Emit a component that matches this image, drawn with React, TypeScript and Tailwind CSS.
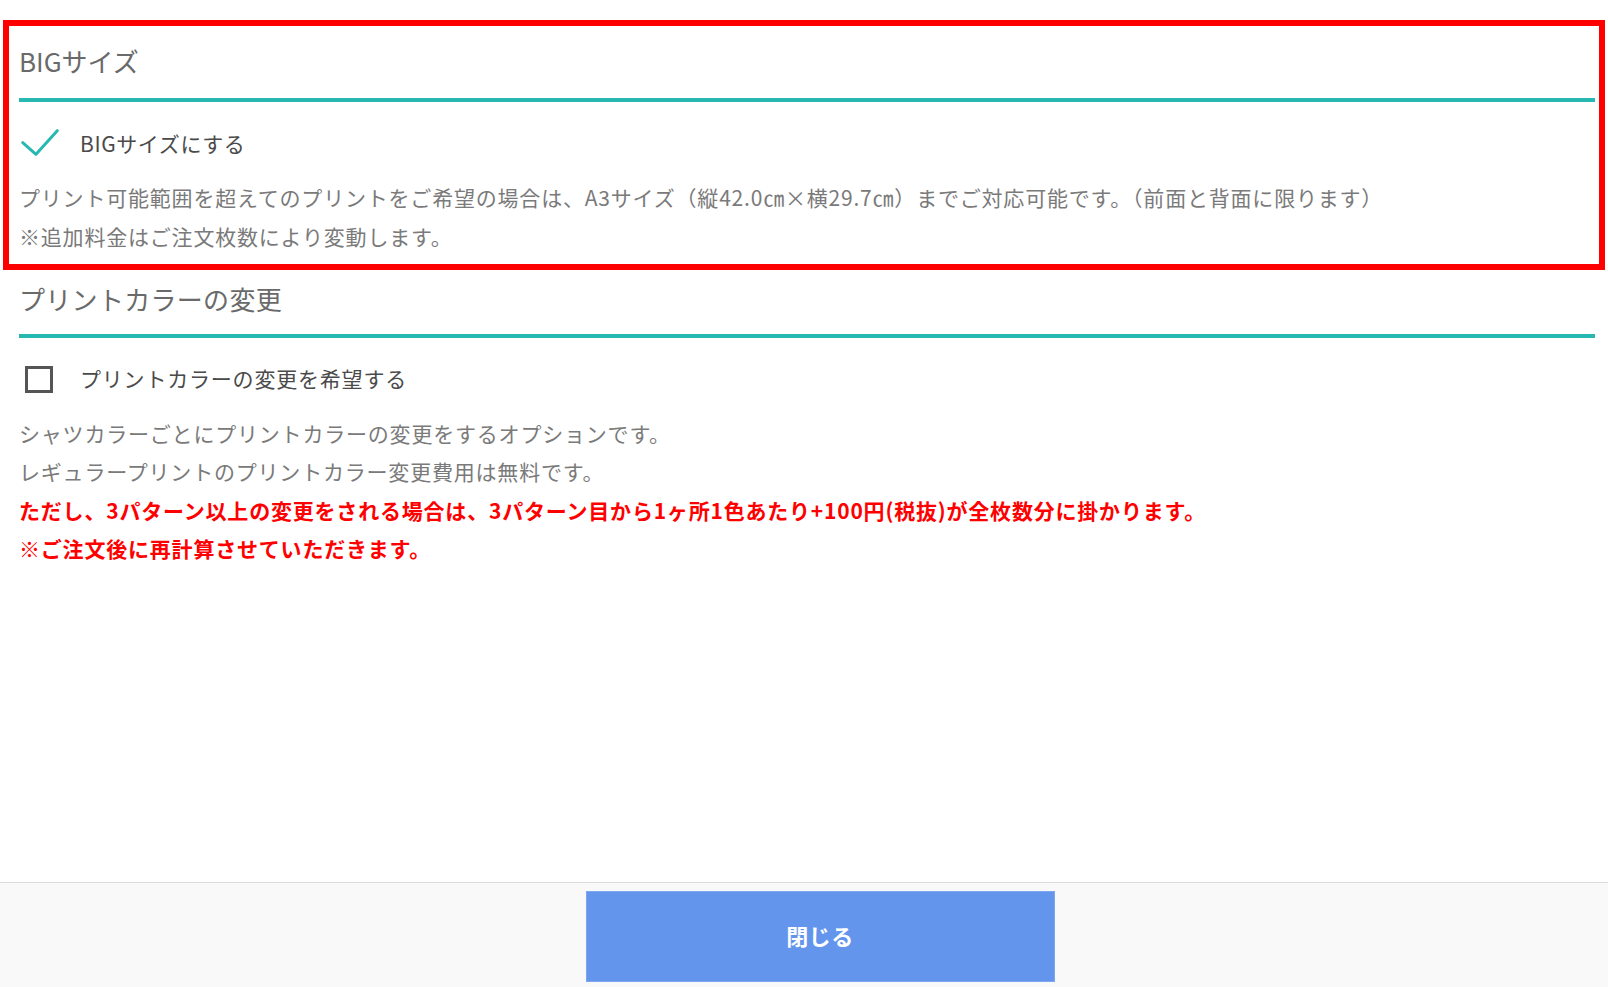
import React from "react";

const FONT = "font-['Noto_Sans_CJK_JP','Noto_Sans_CJK_SC',sans-serif]";

export default function App() {
  return (
    <div className={`relative w-[1608px] h-[987px] bg-white flex flex-col ${FONT}`}>
      <div className="h-[882px] pl-[19px] pr-[13px] flex flex-col">
        {/* Section 1 */}
        <div className="mt-[42px] text-[26px] leading-[38px] text-[#6a6a6a] pb-[18px] border-b-[4px] border-[#27b9b1]">
          BIGサイズ
        </div>
        <div className="mt-[23px] flex items-center h-[38px]">
          <div className="w-[61px] h-[38px] shrink-0">
            <svg width="61" height="38" viewBox="0 0 61 38">
              <polyline
                points="3.7,17.7 17,29.3 38.3,5.7"
                fill="none"
                stroke="#27b9b1"
                strokeWidth="3"
                strokeLinecap="round"
                strokeLinejoin="round"
              />
            </svg>
          </div>
          <span className="text-[21px] text-[#4a4a4a] tracking-[0.6px]">BIGサイズにする</span>
        </div>
        <div className="mt-[15px] text-[21px] leading-[39px] text-[#7a7a7a] tracking-[0.8px]">
          <p>プリント可能範囲を超えてのプリントをご希望の場合は、A3サイズ（縦42.0㎝×横29.7㎝）までご対応可能です。（前面と背面に限ります）</p>
          <p>※追加料金はご注文枚数により変動します。</p>
        </div>

        {/* Section 2 */}
        <div className="mt-[24px] text-[26px] leading-[38px] text-[#6a6a6a] tracking-[0.3px] pb-[16px] border-b-[4px] border-[#27b9b1]">
          プリントカラーの変更
        </div>
        <div className="mt-[22px] flex items-center h-[38px]">
          <div className="w-[61px] h-[38px] shrink-0 flex items-center">
            <div className="ml-[6px] w-[28px] h-[27px] border-[3px] border-[#555555] bg-white"></div>
          </div>
          <span className="text-[21px] text-[#4a4a4a] tracking-[0.8px]">プリントカラーの変更を希望する</span>
        </div>
        <div className="mt-[16px] text-[21px] leading-[38.3px] tracking-[0.8px]">
          <p className="text-[#7a7a7a]">シャツカラーごとにプリントカラーの変更をするオプションです。</p>
          <p className="text-[#7a7a7a]">レギュラープリントのプリントカラー変更費用は無料です。</p>
          <p className="text-[#ff0000] font-bold">ただし、3パターン以上の変更をされる場合は、3パターン目から1ヶ所1色あたり+100円(税抜)が全枚数分に掛かります。</p>
          <p className="text-[#ff0000] font-bold">※ご注文後に再計算させていただきます。</p>
        </div>
      </div>

      {/* Footer */}
      <div className="h-[105px] bg-[#f9f9f9] border-t-[1px] border-[#dcdcdc] flex justify-center items-start pl-[32px] pt-[8px]">
        <button className="w-[469px] h-[91px] bg-[#6495ed] border border-[#7fa6f0] text-white text-[22px] font-bold tracking-[0.5px] pb-[2px]">
          閉じる
        </button>
      </div>

      {/* Red annotation frame */}
      <div className="absolute left-[3px] top-[20px] w-[1602px] h-[250px] border-[6px] border-[#ff0000] pointer-events-none"></div>
    </div>
  );
}
